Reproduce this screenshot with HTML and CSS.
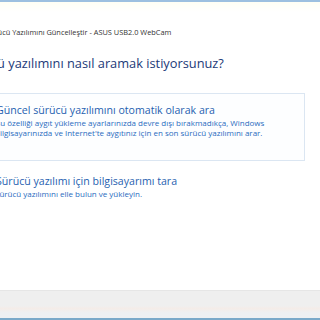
FILE: index.html
```html
<!DOCTYPE html>
<html lang="tr">
<head>
  <meta charset="UTF-8">
  <title>Sürücü Yazılımını Güncelleştir</title>
  <link rel="stylesheet" href="styles.css">
</head>
<body>
  <div class="window">
    <div class="topEdge"></div>
    <div class="content">
      <p class="caption">Sürücü Yazılımını Güncelleştir - ASUS USB2.0 WebCam</p>
      <h1 class="instruction">Sürücü yazılımını nasıl aramak istiyorsunuz?</h1>

      <div class="option hover">
        <div class="optTitle">Güncel sürücü yazılımını otomatik olarak ara</div>
        <div class="optDesc">Bu özelliği aygıt yükleme ayarlarınızda devre dışı bırakmadıkça, Windows<br>bilgisayarınızda ve Internet'te aygıtınız için en son sürücü yazılımını arar.</div>
      </div>

      <div class="option">
        <div class="optTitle">Sürücü yazılımı için bilgisayarımı tara</div>
        <div class="optDesc">Sürücü yazılımını elle bulun ve yükleyin.</div>
      </div>
    </div>
    <div class="footer"></div>
  </div>
</body>
</html>
```

FILE: styles.css
```css
* { box-sizing: border-box; }
html, body {
  margin: 0;
  padding: 0;
  width: 320px;
  height: 320px;
  overflow: hidden;
  background: #fff;
}
.window {
  height: 320px;
  display: flex;
  flex-direction: column;
  font-family: 'Open Sans', 'Noto Sans', sans-serif;
}
.topEdge {
  height: 12px;
  border-top: 2px solid #9dc0e0;
  background: linear-gradient(#fffff4, #fff);
}
.content {
  flex: 1;
}
.caption {
  margin: 15px 0 0 -14px;
  font-size: 7.4px;
  line-height: 10px;
  color: #333;
  white-space: nowrap;
}
.instruction {
  margin: 18px 0 0 -37px;
  font-size: 12.8px;
  line-height: 17px;
  font-weight: normal;
  color: #1c3a78;
  white-space: nowrap;
}
.option {
  margin: 21px 0 0 -30px;
  width: 335px;
  padding: 9px 0 23px 25px;
  border: 1px solid transparent;
  white-space: nowrap;
}
.option + .option {
  margin-top: 3px;
}
.option.hover {
  border-color: #dbe6f2;
  background: #fdfeff;
}
.optTitle {
  font-size: 10.6px;
  line-height: 14px;
  color: #1f5fb0;
}
.optDesc {
  margin-top: 1px;
  margin-left: -1px;
  font-size: 8px;
  line-height: 9.5px;
  color: #2a6cc0;
}
.footer {
  height: 30px;
  border-top: 1px solid #e6e6e6;
  background: linear-gradient(#efefef 0%, #efefef 55%, #f4ece8 65%, #eef0f2 80%, #eef0f2 93%);
  border-bottom: 2px solid #7aa9c9;
}
```
